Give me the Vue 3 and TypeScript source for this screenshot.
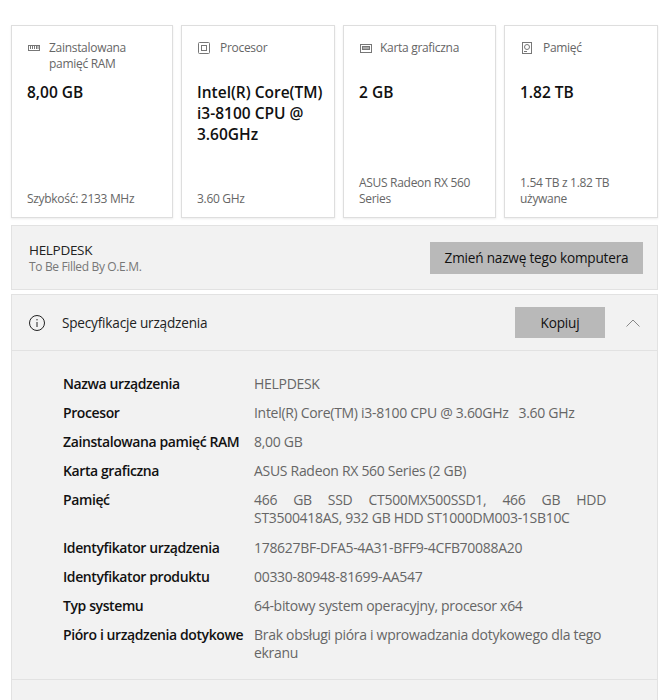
<script setup lang="ts">
interface Card {
  icon: string
  label: string
  value: string
  note: string
}

const cards: Card[] = [
  { icon: 'ram', label: 'Zainstalowana pamięć RAM', value: '8,00 GB', note: 'Szybkość: 2133 MHz' },
  { icon: 'cpu', label: 'Procesor', value: 'Intel(R) Core(TM) i3-8100 CPU @ 3.60GHz', note: '3.60 GHz' },
  { icon: 'gpu', label: 'Karta graficzna', value: '2 GB', note: 'ASUS Radeon RX 560 Series' },
  { icon: 'disk', label: 'Pamięć', value: '1.82 TB', note: '1.54 TB z 1.82 TB używane' },
]

const specs: { name: string; value: string; cls?: string }[] = [
  { name: 'Nazwa urządzenia', value: 'HELPDESK' },
  { name: 'Procesor', value: 'Intel(R) Core(TM) i3-8100 CPU @ 3.60GHz\u00a0\u00a0 3.60 GHz' },
  { name: 'Zainstalowana pamięć RAM', value: '8,00 GB' },
  { name: 'Karta graficzna', value: 'ASUS Radeon RX 560 Series (2 GB)' },
  { name: 'Pamięć', value: '466 GB SSD CT500MX500SSD1, 466 GB HDD ST3500418AS, 932 GB HDD ST1000DM003-1SB10C', cls: 'justify' },
  { name: 'Identyfikator urządzenia', value: '178627BF-DFA5-4A31-BFF9-4CFB70088A20' },
  { name: 'Identyfikator produktu', value: '00330-80948-81699-AA547' },
  { name: 'Typ systemu', value: '64-bitowy system operacyjny, procesor x64' },
  { name: 'Pióro i urządzenia dotykowe', value: 'Brak obsługi pióra i wprowadzania dotykowego dla tego ekranu' },
]
</script>

<template>
  <div class="page">
    <div class="cards">
      <div v-for="card in cards" :key="card.label" class="card" :class="'card-' + card.icon">
        <div class="card-head">
          <svg class="icon" viewBox="0 0 14 14" fill="none" stroke="#777" stroke-width="1">
            <template v-if="card.icon === 'ram'">
              <rect x="1.5" y="4.5" width="11" height="5" />
              <path d="M3.5 5v3M5.5 5v3M7.5 5v3M9.5 5v3M11 5v3" />
            </template>
            <template v-else-if="card.icon === 'cpu'">
              <rect x="1.5" y="1.5" width="11" height="11" rx="1" />
              <rect x="4.5" y="4.5" width="5" height="5" />
            </template>
            <template v-else-if="card.icon === 'gpu'">
              <rect x="1.5" y="3.5" width="11" height="8" />
              <rect x="3.5" y="5.5" width="7" height="3" fill="#aaa" />
            </template>
            <template v-else>
              <rect x="2.5" y="1.5" width="9" height="11" />
              <circle cx="7" cy="6" r="2.5" />
              <path d="M4 10.5h3" />
            </template>
          </svg>
          <span class="card-label">{{ card.label }}</span>
        </div>
        <div class="card-value">{{ card.value }}</div>
        <div class="card-note">{{ card.note }}</div>
      </div>
    </div>

    <div class="panel name-panel">
      <div>
        <div class="pc-name">HELPDESK</div>
        <div class="pc-model">To Be Filled By O.E.M.</div>
      </div>
      <div class="btn rename">Zmień nazwę tego komputera</div>
    </div>

    <div class="panel spec-panel">
      <div class="spec-head">
        <svg class="info" viewBox="0 0 18 18" fill="none" stroke="#222" stroke-width="1">
          <circle cx="9" cy="9" r="7.5" />
          <path d="M9 8v5M9 5v1.4" />
        </svg>
        <span class="spec-title">Specyfikacje urządzenia</span>
        <div class="btn copy">Kopiuj</div>
        <svg class="chevron" viewBox="0 0 14 8" fill="none" stroke="#888" stroke-width="1">
          <path d="M.5 7.5 7 1l6.5 6.5" />
        </svg>
      </div>
      <div class="spec-body">
        <div v-for="row in specs" :key="row.name" class="spec-row" :class="row.cls">
          <div class="spec-name">{{ row.name }}</div>
          <div class="spec-value">{{ row.value }}</div>
        </div>
      </div>
      <div class="spec-foot"></div>
    </div>
  </div>
</template>

<style scoped>
.page {
  width: 664px;
  height: 700px;
  overflow: hidden;
  box-sizing: border-box;
  padding: 25px 6px 0 11px;
  font-family: "Open Sans", "Noto Sans", sans-serif;
  background: #fff;
  color: #111;
}

.cards {
  display: grid;
  grid-template-columns: 162px 154px 153px 154px;
  gap: 8px;
  height: 193px;
}

.card {
  display: flex;
  flex-direction: column;
  box-sizing: border-box;
  border: 1px solid #dedede;
  box-shadow: 0 1px 2px rgba(0, 0, 0, 0.08);
  padding: 14px 5px 10px 15px;
  background: #fff;
}

.card-head {
  display: flex;
  gap: 8px;
  min-height: 32px;
}

.icon {
  flex: none;
  width: 14px;
  height: 14px;
  margin-top: 1px;
}

.card-cpu .icon,
.card-disk .icon {
  margin-right: 1px;
}

.card-gpu .icon {
  margin-right: -1px;
}

.card-label {
  font-size: 12px;
  line-height: 16px;
  color: #666;
  letter-spacing: -0.3px;
}

.card-value {
  margin-top: 10px;
  font-size: 15.5px;
  line-height: 21px;
  font-weight: 600;
  color: #111;
  flex: 1;
}

.card-note {
  font-size: 12px;
  line-height: 16px;
  color: #666;
  letter-spacing: -0.3px;
}

.panel {
  width: 647px;
  box-sizing: border-box;
  background: #f2f2f2;
  border: 1px solid #e2e2e2;
}

.name-panel {
  display: flex;
  align-items: center;
  justify-content: space-between;
  height: 65px;
  margin-top: 7px;
  padding: 0 14px 0 17px;
}

.pc-name {
  font-size: 13.5px;
  line-height: 17px;
  letter-spacing: -0.3px;
  color: #222;
}

.pc-model {
  font-size: 12px;
  line-height: 15px;
  letter-spacing: -0.35px;
  color: #777;
}

.btn {
  box-sizing: border-box;
  height: 32px;
  display: flex;
  align-items: center;
  justify-content: center;
  background: #b9b9b9;
  font-size: 13.6px;
  letter-spacing: -0.2px;
  color: #111;
}

.rename {
  width: 213px;
}

.spec-panel {
  margin-top: 4px;
  height: 420px;
}

.spec-head {
  display: flex;
  align-items: center;
  height: 55px;
  padding: 0 17px 0 16px;
  border-bottom: 1px solid #e2e2e2;
}

.info {
  width: 18px;
  height: 18px;
  margin-right: 16px;
}

.spec-title {
  flex: 1;
  font-size: 13.6px;
  letter-spacing: -0.2px;
  color: #222;
}

.copy {
  width: 90px;
  height: 31px;
  margin-right: 21px;
}

.chevron {
  width: 14px;
  height: 8px;
}

.spec-body {
  padding: 22px 51px 0 51px;
}

.spec-row {
  display: flex;
  margin-bottom: 7px;
}

.spec-row.justify {
  margin-bottom: 10px;
}

.spec-name {
  flex: none;
  width: 191px;
  font-size: 14px;
  line-height: 22px;
  font-weight: 600;
  letter-spacing: -0.4px;
  color: #111;
  white-space: nowrap;
}

.spec-value {
  font-size: 14px;
  line-height: 18px;
  padding-top: 2px;
  letter-spacing: -0.3px;
  color: #666;
}

.justify .spec-value {
  text-align: justify;
}

.spec-foot {
  margin-top: 17px;
  border-top: 1px solid #e2e2e2;
}
</style>
